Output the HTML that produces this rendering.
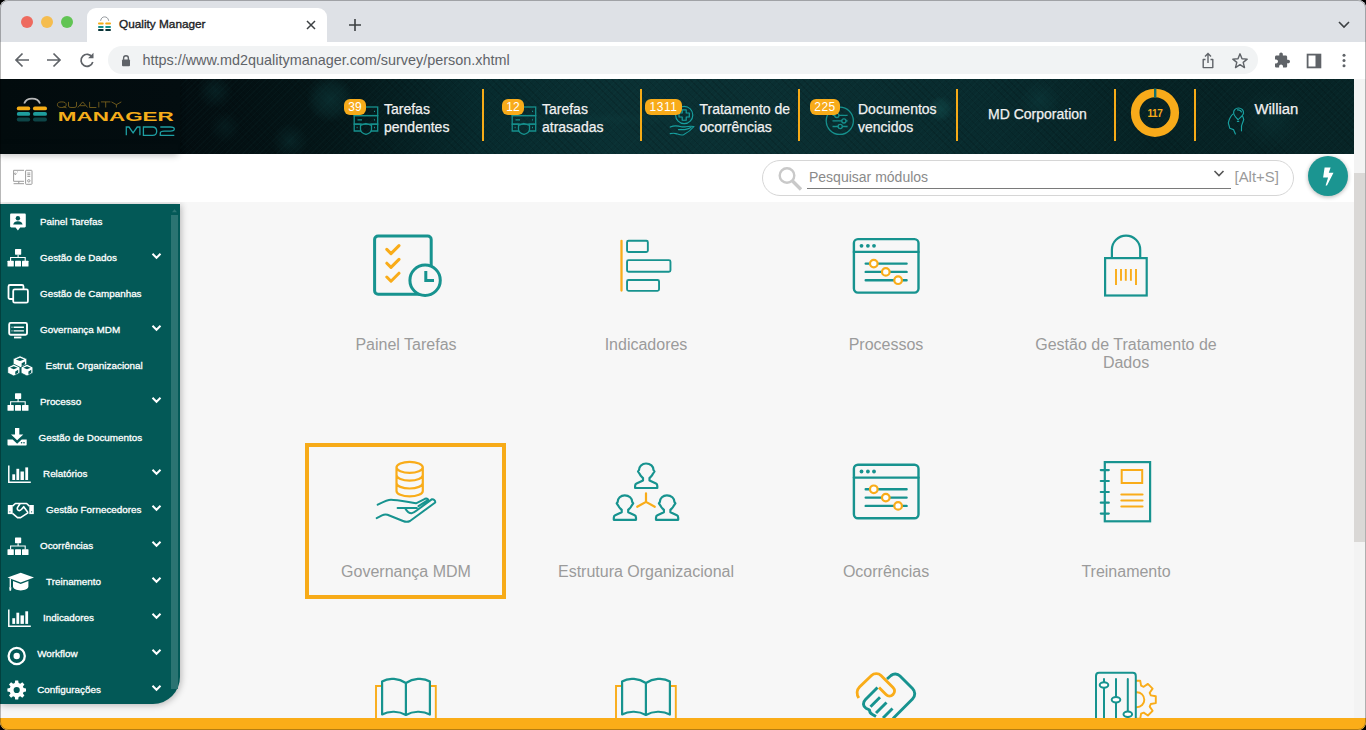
<!DOCTYPE html>
<html><head><meta charset="utf-8">
<style>
*{box-sizing:border-box;margin:0;padding:0}
html,body{width:1366px;height:730px;overflow:hidden;background:#000;font-family:"Liberation Sans",sans-serif}
.abs{position:absolute}
#win{position:absolute;left:0;top:0;width:1366px;height:730px;border-radius:8px;overflow:hidden;background:#dee1e6}
#frame{position:absolute;left:0;top:0;width:1366px;height:730px;border-radius:8px;border:1px solid rgba(0,0,0,.28);pointer-events:none}
#tabs{position:absolute;left:0;top:0;width:1366px;height:42px;background:#dee1e6}
.dot{position:absolute;width:12px;height:12px;border-radius:50%;top:16px}
#tab{position:absolute;left:87px;top:8px;width:240px;height:35px;background:#fff;border-radius:9px 9px 0 0}
#toolbar{position:absolute;left:0;top:42px;width:1366px;height:37px;background:#fff}
#omni{position:absolute;left:108px;top:4px;width:1150px;height:28px;border-radius:14px;background:#f1f3f4}
#header{position:absolute;left:0;top:79px;width:1354px;height:75px;overflow:hidden;
 background:
  radial-gradient(circle at 330px 20px, rgba(16,70,72,.45) 0, rgba(16,70,72,.25) 14px, rgba(16,70,72,0) 24px),
  radial-gradient(circle at 215px 12px, rgba(16,70,72,.3) 0, rgba(16,70,72,0) 18px),
  radial-gradient(circle at 290px 62px, rgba(16,70,72,.3) 0, rgba(16,70,72,0) 18px),
  radial-gradient(circle at 225px 48px, rgba(16,70,72,.2) 0, rgba(16,70,72,0) 16px),
  radial-gradient(circle at 940px 30px, rgba(18,80,80,.55) 0, rgba(18,80,80,.3) 8px, rgba(18,80,80,0) 13px),
  radial-gradient(circle at 1040px 22px, rgba(16,70,72,.35) 0, rgba(16,70,72,0) 20px),
  radial-gradient(circle at 1270px 40px, rgba(16,70,72,.25) 0, rgba(16,70,72,0) 30px),
  radial-gradient(ellipse at 600px 40px, rgba(14,60,62,.35) 0, rgba(14,60,62,0) 120px),
  repeating-linear-gradient(135deg,rgba(40,110,110,.05) 0 1px,rgba(0,0,0,0) 1px 4px),
  repeating-linear-gradient(45deg,rgba(0,0,0,.12) 0 1px,rgba(0,0,0,0) 1px 5px),
  linear-gradient(90deg,#020b0d 0,#030d10 180px,#041618 330px,#072a2d 480px,#0a3033 620px,#0a2e31 820px,#082a2d 1000px,#062224 1150px,#072426 1354px)}
#logoblk{position:absolute;left:0;top:0;width:180px;height:75px;background:linear-gradient(90deg,#020b0d,#030d10);box-shadow:0 2px 5px rgba(0,0,0,.35)}
.sep{position:absolute;top:10px;width:2px;height:52px;background:#f7ab17}
.htxt{position:absolute;color:#f1f1f1;font-size:14px;line-height:18px;white-space:nowrap;-webkit-text-stroke:.25px #f1f1f1}
.badge{position:absolute;top:20px;height:16px;border-radius:6px;background:#f8ab1a;color:#fff;font-size:12px;line-height:16px;text-align:center}
#wbar{position:absolute;left:0;top:154px;width:1354px;height:48px;background:#fff}
#content{position:absolute;left:0;top:202px;width:1354px;height:516px;background:#f7f7f7;overflow:hidden}
#scroll{position:absolute;left:1354px;top:79px;width:12px;height:639px;background:#f3f3f3}
#thumb{position:absolute;left:0;top:94px;width:11px;height:369px;background:#dad8d6}
#ybar{position:absolute;left:0;top:718px;width:1366px;height:12px;background:#fbad18}
#side{position:absolute;left:0;top:2px;width:180px;height:500px;background:#035957;border-radius:0 0 27px 0;box-shadow:1px 1px 7px rgba(0,0,0,.28)}
.si{position:absolute;left:0;width:180px;height:36px;color:#fff;font-weight:bold;font-size:9.4px}
.si .t{position:absolute;top:12px;white-space:nowrap}
.lbl{position:absolute;width:220px;text-align:center;color:#9b9b9b;font-size:16px;line-height:18px}
.st{position:absolute;color:#fff;font-size:9.9px;line-height:12px;white-space:nowrap;-webkit-text-stroke:.3px #fff}
</style></head><body>
<div id="win">
 <div id="tabs">
  <div class="dot" style="left:21px;background:#ee6a5f"></div>
  <div class="dot" style="left:41px;background:#f5bd4f"></div>
  <div class="dot" style="left:61px;background:#61c454"></div>
  <div id="tab"></div>
  <svg class="abs" style="left:97px;top:16px" width="16" height="16" viewBox="0 0 16 16">
   <path d="M3.6 4.8C4 1.9 5.8 0.9 7.6 0.9C9.4 0.9 11.2 1.9 11.7 4.8" fill="none" stroke="#8a8f94" stroke-width=".9"/>
   <rect x="1" y="6.6" width="5.7" height="1.9" rx=".9" fill="#f6ab17"/><rect x="8.2" y="6.6" width="5.8" height="1.9" rx=".9" fill="#f6ab17"/>
   <rect x="1" y="10" width="5.7" height="1.9" rx=".9" fill="#16908d"/><rect x="8.2" y="10" width="5.8" height="1.9" rx=".9" fill="#16908d"/>
   <rect x="1" y="13" width="5.7" height="1.9" rx=".9" fill="#0b3538"/><rect x="8.2" y="13" width="5.8" height="1.9" rx=".9" fill="#0b3538"/>
  </svg>
  <div class="abs" style="left:119px;top:17px;font-size:11.8px;line-height:14px;color:#202124;-webkit-text-stroke:.35px #202124">Quality Manager</div>
  <svg class="abs" style="left:305px;top:19px" width="12" height="12" viewBox="0 0 12 12"><path d="M2 2L10 10M10 2L2 10" stroke="#3c4043" stroke-width="1.5"/></svg>
  <svg class="abs" style="left:348px;top:18px" width="14" height="14" viewBox="0 0 14 14"><path d="M7 1V13M1 7H13" stroke="#3c4043" stroke-width="1.6"/></svg>
  <svg class="abs" style="left:1337px;top:18px" width="14" height="12" viewBox="0 0 14 12"><path d="M2 4L7 9L12 4" fill="none" stroke="#3c4043" stroke-width="1.6"/></svg>
 </div>
 <div id="toolbar">
  <div id="omni"></div>
  <svg class="abs" style="left:13px;top:9px" width="18" height="18" viewBox="0 0 18 18"><path d="M16 9H3M9.5 2.5L3 9L9.5 15.5" fill="none" stroke="#5f6368" stroke-width="1.7"/></svg>
  <svg class="abs" style="left:45px;top:9px" width="18" height="18" viewBox="0 0 18 18"><path d="M2 9H15M8.5 2.5L15 9L8.5 15.5" fill="none" stroke="#5f6368" stroke-width="1.7"/></svg>
  <svg class="abs" style="left:78px;top:9px" width="18" height="18" viewBox="0 0 18 18"><path d="M14.2 6.2A6 6 0 1 0 14.8 11" fill="none" stroke="#5f6368" stroke-width="1.7"/><path d="M15.5 1.8V7.2H10.1Z" fill="#5f6368"/></svg>
  <svg class="abs" style="left:121px;top:12px" width="10" height="13" viewBox="0 0 10 13"><path d="M2.6 6V4.2A2.4 2.4 0 0 1 7.4 4.2V6" fill="none" stroke="#5f6368" stroke-width="1.4"/><rect x="1" y="5.6" width="8" height="6.6" rx="1" fill="#5f6368"/></svg>
  <div class="abs" style="left:142.5px;top:9px;font-size:14.4px;line-height:18px;color:#5f6368;white-space:nowrap">https://www.md2qualitymanager.com/survey/person.xhtml</div>
  <svg class="abs" style="left:1199px;top:10px" width="18" height="18" viewBox="0 0 18 18"><path d="M6.5 7.5H4.2V15.6H13.8V7.5H11.5" fill="none" stroke="#5f6368" stroke-width="1.4" stroke-linejoin="round"/><path d="M9 11V1.8M6 4.6L9 1.6L12 4.6" fill="none" stroke="#5f6368" stroke-width="1.4"/></svg>
  <svg class="abs" style="left:1231px;top:10px" width="18" height="18" viewBox="0 0 18 18"><path d="M9 1.8L11 6.8L16.2 7.1L12.2 10.4L13.5 15.6L9 12.7L4.5 15.6L5.8 10.4L1.8 7.1L7 6.8Z" fill="none" stroke="#5f6368" stroke-width="1.4" stroke-linejoin="round"/></svg>
  <svg class="abs" style="left:1273px;top:10px" width="18" height="18" viewBox="0 0 18 18"><path transform="translate(0.57 -0.11) scale(0.714)" d="M20.5 11H19V7c0-1.1-.9-2-2-2h-4V3.5C13 2.12 11.88 1 10.5 1S8 2.12 8 3.5V5H4c-1.1 0-1.99.9-1.99 2v3.8H3.5c1.490 0 2.7 1.21 2.7 2.7s-1.21 2.7-2.7 2.7H2V20c0 1.1.9 2 2 2h3.8v-1.5c0-1.49 1.21-2.7 2.7-2.7 1.49 0 2.7 1.21 2.7 2.7V22H17c1.1 0 2-.9 2-2v-4h1.5c1.38 0 2.5-1.12 2.5-2.5S21.88 11 20.5 11z" fill="#5f6368"/></svg>
  <svg class="abs" style="left:1305px;top:10px" width="18" height="18" viewBox="0 0 18 18"><rect x="2.6" y="2.6" width="12.8" height="12.8" fill="none" stroke="#5f6368" stroke-width="1.8"/><rect x="10.5" y="2.6" width="4.9" height="12.8" fill="#5f6368"/></svg>
  <svg class="abs" style="left:1336px;top:10px" width="16" height="18" viewBox="0 0 16 18"><circle cx="8" cy="3.2" r="1.5" fill="#5f6368"/><circle cx="8" cy="8.5" r="1.5" fill="#5f6368"/><circle cx="8" cy="13.8" r="1.5" fill="#5f6368"/></svg>
 </div>
 <div id="header">
  <div id="logoblk">
   <svg class="abs" style="left:0;top:0" width="180" height="75" viewBox="0 0 180 75">
    <path d="M24.2 24.5 A8.3 7 0 0 1 40 24.5" fill="none" stroke="#b8b8b8" stroke-width="1.8"/>
    <rect x="16.8" y="27.6" width="13.4" height="3.7" rx="1.85" fill="#f5ad17"/><rect x="33" y="27.6" width="14" height="3.7" rx="1.85" fill="#f5ad17"/>
    <rect x="16.8" y="33.1" width="13.4" height="3.7" rx="1.85" fill="#1e9d9d"/><rect x="33" y="33.1" width="14" height="3.7" rx="1.85" fill="#1e9d9d"/>
    <rect x="16.8" y="38.6" width="13.4" height="3.8" rx="1.9" fill="#0d4547"/><rect x="33" y="38.6" width="14" height="3.8" rx="1.9" fill="#0d4547"/>
    <g fill="none" stroke="#8c6f20" stroke-width=".75"><ellipse cx="61.8" cy="25.7" rx="4.4" ry="2.8"/><path d="M63.5 27.5L66.5 28.8"/><path d="M68.5 22.9V27.0Q68.5 28.5 71 28.5H74Q76.5 28.5 76.5 27.0V22.9"/><path d="M77.8 28.5L82.7 22.9L87.6 28.5M80 26.7H85.3"/><path d="M89.6 22.9V28.5H96.4"/><path d="M98.8 22.9V28.5"/><path d="M101 22.9H110.4M105.7 22.9V28.5"/><path d="M111.5 22.9L116.4 25.7L121.3 22.9M116.4 25.7V28.5"/></g>
    <text x="57.8" y="42.2" textLength="116" lengthAdjust="spacingAndGlyphs" font-family="Liberation Sans" font-weight="bold" font-size="12.6" fill="#f6ae1b">MANAGER</text>
    <g fill="none" stroke="#1e9fa3" stroke-width="1.3"><path d="M126.3 56.3V48H129L133.1 53.8L137.2 48H139.9V56.3"/><path d="M143.4 56.3V48H152.5Q156.7 48 156.7 52.15Q156.7 56.3 152.5 56.3Z"/><path d="M160.3 48H170.3Q174.3 48 174.3 50.1Q174.3 52.2 170.3 52.2H164.3Q160.3 52.2 160.3 54.3V56.3H174.3"/></g>
   </svg>
  </div>
  <!-- item 1 -->
  <svg class="abs" style="left:353px;top:27px" width="26" height="29" viewBox="0 0 26 29" fill="none" stroke="#16908d" stroke-width="1.3">
   <rect x="1.2" y="1" width="23.5" height="8.6"/><rect x="1.2" y="9.6" width="23.5" height="8.6"/>
   <path d="M8.5 18.2H1.2V25H8.2M17.5 18.2H24.7V25H17.7"/>
   <path d="M13 17.5L18.5 19.5V23.5C18.5 26 15.8 27.6 13 28.4C10.2 27.6 7.5 26 7.5 23.5V19.5Z"/>
   <path d="M4.5 13.9H9M21 5.3H22M21 13.9H22M21 21.5H22M3.6 21.5H4.6"/>
  </svg>
  <div class="badge" style="left:344px;width:22px">39</div>
  <div class="htxt" style="left:384px;top:21px">Tarefas<br>pendentes</div>
  <!-- item 2 -->
  <svg class="abs" style="left:511px;top:27px" width="26" height="29" viewBox="0 0 26 29" fill="none" stroke="#16908d" stroke-width="1.3">
   <rect x="1.2" y="1" width="23.5" height="8.6"/><rect x="1.2" y="9.6" width="23.5" height="8.6"/>
   <path d="M8.5 18.2H1.2V25H8.2M17.5 18.2H24.7V25H17.7"/>
   <path d="M13 17.5L18.5 19.5V23.5C18.5 26 15.8 27.6 13 28.4C10.2 27.6 7.5 26 7.5 23.5V19.5Z"/>
   <path d="M4.5 13.9H9M21 5.3H22M21 13.9H22M21 21.5H22M3.6 21.5H4.6"/>
  </svg>
  <div class="badge" style="left:502px;width:22px">12</div>
  <div class="htxt" style="left:542px;top:21px">Tarefas<br>atrasadas</div>
  <!-- item 3 -->
  <svg class="abs" style="left:669px;top:26px" width="26" height="31" viewBox="0 0 26 31" fill="none" stroke="#17a0a0" stroke-width="1.15" stroke-linejoin="round" stroke-linecap="round">
   <circle cx="15.2" cy="10" r="8.6"/>
   <path d="M13.2 4.8H17.2V8H20.3V12H17.2V15.2H13.2V12H10V8H13.2Z"/>
   <path d="M1.2 22.1C4 20.8 8 20.5 12.5 21.8L16.5 21.8C19 21.3 21.5 20.8 25 21.5C22.5 24.5 19 27.5 14.5 29.8C12.5 30.6 10 29.5 7 28.6C5 28.1 3 28.2 1.2 28.6M9.5 24.6H15.8C18 24.3 20 23.5 22 22.5"/>
  </svg>
  <div class="badge" style="left:645px;width:37px;letter-spacing:.6px">1311</div>
  <div class="htxt" style="left:699.5px;top:21px">Tratamento de<br>ocorrências</div>
  <!-- item 4 -->
  <svg class="abs" style="left:825px;top:27px" width="30" height="30" viewBox="0 0 30 30" fill="none" stroke="#16908d" stroke-width="1.3">
   <circle cx="14.8" cy="14.8" r="13.6"/>
   <path d="M7.5 9.4H22.6M7.5 14.9H22.6M7.5 20.5H22.6"/>
   <circle cx="11.8" cy="9.4" r="2.1" fill="#0a2a2c"/><circle cx="18.9" cy="14.9" r="2.1" fill="#0a2a2c"/><circle cx="15.2" cy="20.5" r="2.1" fill="#0a2a2c"/>
  </svg>
  <div class="badge" style="left:810px;width:30px;letter-spacing:.5px">225</div>
  <div class="htxt" style="left:858px;top:21px">Documentos<br>vencidos</div>
  <!-- corp -->
  <div class="htxt" style="left:988px;top:26px">MD Corporation</div>
  <!-- donut -->
  <svg class="abs" style="left:1130px;top:9px" width="50" height="50" viewBox="0 0 50 50">
   <circle cx="25" cy="24.8" r="19.8" fill="none" stroke="#f8ab1a" stroke-width="8.6"/>
   <path d="M25.2 0.6V9.6" stroke="#11706f" stroke-width="2.4"/>
   <text x="25" y="28.5" text-anchor="middle" font-family="Liberation Sans" font-weight="bold" font-size="10" fill="#f8ab1a" letter-spacing="-.3">117</text>
  </svg>
  <!-- person -->
  <svg class="abs" style="left:1226px;top:27px" width="22" height="30" viewBox="0 0 22 30" fill="none" stroke="#19a3a3" stroke-width="1.15" stroke-linejoin="round" stroke-linecap="round">
   <path d="M12.1 13.7C10 11.5 7.8 9.5 7.6 7C7.4 4 9.8 2 12.5 2C15.5 2 17.7 4.2 17.5 7C17.3 9.5 14.3 11.5 12.1 13.7Z"/>
   <path d="M11.5 3.9C13.5 3.7 15 4.5 15.5 6M11.4 15.3H12.8"/>
   <path d="M6.9 8.1C5 9.5 3.5 12 2.3 16.8L3.8 22.3L7.5 23.6L9.4 27.9M16.5 10C17 11 17.7 12.5 17.7 13.7L15.5 19.9V24.8"/>
  </svg>
  <div class="htxt" style="left:1254.5px;top:21.3px;font-size:14.9px">Willian</div>
  <div class="sep" style="left:482px"></div>
  <div class="sep" style="left:640px"></div>
  <div class="sep" style="left:798px"></div>
  <div class="sep" style="left:956px"></div>
  <div class="sep" style="left:1114px"></div>
  <div class="sep" style="left:1194px"></div>
 </div>
 <div id="wbar">
  <div class="abs" style="left:0;top:-10px;width:178px;height:10px;box-shadow:0 2px 6px rgba(0,0,0,.22)"></div>
  <svg class="abs" style="left:12px;top:15px" width="22" height="17" viewBox="0 0 22 17" fill="none" stroke="#9b9b9b" stroke-width="1">
   <path d="M12 1.3H1.6V12.3H12M1.6 14.7H12M6.8 12.3V14.7"/>
   <rect x="13.6" y="1.3" width="6.4" height="14" rx=".6"/>
   <path d="M15.3 4H18.3M15.3 5.7H18.3M15.3 7.4H18.3"/><circle cx="16.8" cy="11.8" r="1.2"/>
   <path d="M3.3 3.8L4.3 4.8L3.3 5.8L2.3 4.8ZM5.2 3.2L5.8 2.6"/>
  </svg>
  <div class="abs" style="left:762px;top:6px;width:532px;height:36px;border:1px solid #d6d6d6;border-radius:18px"></div>
  <svg class="abs" style="left:777px;top:12px" width="27" height="26" viewBox="0 0 27 26">
   <circle cx="10" cy="9.5" r="7.3" fill="none" stroke="#c9c9c9" stroke-width="2.4"/>
   <path d="M15.5 15L24 23.5" stroke="#c9c9c9" stroke-width="3.4"/>
  </svg>
  <div class="abs" style="left:809px;top:15px;font-size:14px;line-height:16px;color:#8a8a8a;white-space:nowrap">Pesquisar módulos</div>
  <div class="abs" style="left:807px;top:33.8px;width:424px;height:1.3px;background:#7a7a7a"></div>
  <svg class="abs" style="left:1212px;top:14px" width="14" height="10" viewBox="0 0 14 10"><path d="M2.5 3L7 7.5L11.5 3" fill="none" stroke="#555" stroke-width="1.6"/></svg>
  <div class="abs" style="left:1234.5px;top:14.5px;font-size:14.9px;line-height:16px;color:#9a9a9a;white-space:nowrap">[Alt+S]</div>
  <div class="abs" style="left:1308px;top:2px;width:40px;height:40px;border-radius:50%;background:#1b9591;box-shadow:0 1px 4px rgba(0,0,0,.3)"></div>
  <svg class="abs" style="left:1318px;top:10px" width="20" height="24" viewBox="0 0 20 24"><path d="M6.6 3.5H12.6L10.8 8.8H15.5L9 21.6H7.6L10.1 13.4H5.1Z" fill="#fff"/></svg>
 </div>
 <div id="content">
<div id="side">
<div class="st" style="left:40px;top:11.75px">Painel Tarefas</div>
<div class="st" style="left:40px;top:47.75px">Gestão de Dados</div>
<svg class="abs" style="left:150px;top:46.5px" width="13" height="10" viewBox="0 0 13 10"><path d="M2.5 2.8L6.5 6.8L10.5 2.8" fill="none" stroke="#fff" stroke-width="2"/></svg>
<div class="st" style="left:40px;top:83.75px">Gestão de Campanhas</div>
<div class="st" style="left:40px;top:119.75px">Governança MDM</div>
<svg class="abs" style="left:150px;top:118.5px" width="13" height="10" viewBox="0 0 13 10"><path d="M2.5 2.8L6.5 6.8L10.5 2.8" fill="none" stroke="#fff" stroke-width="2"/></svg>
<div class="st" style="left:45.6px;top:155.75px">Estrut. Organizacional</div>
<div class="st" style="left:40px;top:191.75px">Processo</div>
<svg class="abs" style="left:150px;top:190.5px" width="13" height="10" viewBox="0 0 13 10"><path d="M2.5 2.8L6.5 6.8L10.5 2.8" fill="none" stroke="#fff" stroke-width="2"/></svg>
<div class="st" style="left:38.5px;top:227.75px">Gestão de Documentos</div>
<div class="st" style="left:43px;top:263.75px">Relatórios</div>
<svg class="abs" style="left:150px;top:262.5px" width="13" height="10" viewBox="0 0 13 10"><path d="M2.5 2.8L6.5 6.8L10.5 2.8" fill="none" stroke="#fff" stroke-width="2"/></svg>
<div class="st" style="left:46px;top:299.75px">Gestão Fornecedores</div>
<svg class="abs" style="left:150px;top:298.5px" width="13" height="10" viewBox="0 0 13 10"><path d="M2.5 2.8L6.5 6.8L10.5 2.8" fill="none" stroke="#fff" stroke-width="2"/></svg>
<div class="st" style="left:40px;top:335.75px">Ocorrências</div>
<svg class="abs" style="left:150px;top:334.5px" width="13" height="10" viewBox="0 0 13 10"><path d="M2.5 2.8L6.5 6.8L10.5 2.8" fill="none" stroke="#fff" stroke-width="2"/></svg>
<div class="st" style="left:46px;top:371.75px">Treinamento</div>
<svg class="abs" style="left:150px;top:370.5px" width="13" height="10" viewBox="0 0 13 10"><path d="M2.5 2.8L6.5 6.8L10.5 2.8" fill="none" stroke="#fff" stroke-width="2"/></svg>
<div class="st" style="left:43px;top:407.75px">Indicadores</div>
<svg class="abs" style="left:150px;top:406.5px" width="13" height="10" viewBox="0 0 13 10"><path d="M2.5 2.8L6.5 6.8L10.5 2.8" fill="none" stroke="#fff" stroke-width="2"/></svg>
<div class="st" style="left:37.2px;top:443.75px">Workflow</div>
<svg class="abs" style="left:150px;top:442.5px" width="13" height="10" viewBox="0 0 13 10"><path d="M2.5 2.8L6.5 6.8L10.5 2.8" fill="none" stroke="#fff" stroke-width="2"/></svg>
<div class="st" style="left:37.2px;top:479.75px">Configurações</div>
<svg class="abs" style="left:150px;top:478.5px" width="13" height="10" viewBox="0 0 13 10"><path d="M2.5 2.8L6.5 6.8L10.5 2.8" fill="none" stroke="#fff" stroke-width="2"/></svg>
<svg class="abs" style="left:0;top:0" width="40" height="500" viewBox="0 0 40 500">
<path d="M11.3 9.6H24.6C25.3 9.6 25.8 10.1 25.8 10.8V22.3C25.8 23 25.3 23.5 24.6 23.5H20.2L17.9 26.4L15.6 23.5H11.3C10.6 23.5 10.1 23 10.1 22.3V10.8C10.1 10.1 10.6 9.6 11.3 9.6Z" fill="#fff"/>
<circle cx="17.9" cy="14.2" r="2.2" fill="#035957"/><path d="M13.2 20.6C13.5 18.3 15.5 17.2 17.9 17.2C20.3 17.2 22.3 18.3 22.6 20.6Z" fill="#035957"/>
<rect x="15" y="45" width="6.2" height="5.7" rx=".6" fill="#fff"/><path d="M18.1 50.7V53.5M10.6 56.9V53.5H25.2V56.9" fill="none" stroke="#fff" stroke-width="1.1"/><rect x="7.5" y="56.7" width="6.3" height="5.9" rx=".6" fill="#fff"/><rect x="15" y="56.7" width="6" height="5.9" rx=".6" fill="#fff"/><rect x="22" y="56.7" width="6.5" height="5.9" rx=".6" fill="#fff"/>
<rect x="8.5" y="81" width="15" height="14" rx="1.5" fill="none" stroke="#fff" stroke-width="1.8"/>
<rect x="13.2" y="85.4" width="14.7" height="13.3" rx="1.5" fill="#035957" stroke="#fff" stroke-width="1.8"/>
<rect x="9.2" y="118.9" width="17.8" height="11.8" rx="1.5" fill="none" stroke="#fff" stroke-width="1.9"/>
<path d="M14 132.6H21.4V134.4H14Z" fill="#fff"/><path d="M13.6 123.3H23.9M13.6 126.9H23.9" stroke="#fff" stroke-width="1.4"/><path d="M11.6 123.3H12.4M11.6 126.9H12.4" stroke="#fff" stroke-width="1.4"/>
<path d="M20 151.8L26.8 154.8V160.8L20 163.8L13.2 160.8V154.8Z" fill="#fff" stroke="#035957" stroke-width=".8"/><path d="M20 153.84L24.216 155.4L20 156.96L15.783999999999999 155.4Z M21.632 159.24L24.896 157.44V160.44L21.632 162.24Z" fill="#035957"/><path d="M13.8 160.2L19.9 163.14999999999998V169.04999999999998L13.8 172.0L7.700000000000001 169.04999999999998V163.14999999999998Z" fill="#fff" stroke="#035957" stroke-width=".8"/><path d="M13.8 162.206L17.582 163.73999999999998L13.8 165.274L10.018 163.73999999999998Z M15.264000000000001 167.516L18.192 165.74599999999998V168.696L15.264000000000001 170.46599999999998Z" fill="#035957"/><path d="M27 160.2L32.9 163.14999999999998V169.04999999999998L27 172.0L21.1 169.04999999999998V163.14999999999998Z" fill="#fff" stroke="#035957" stroke-width=".8"/><path d="M27 162.206L30.658 163.73999999999998L27 165.274L23.342 163.73999999999998Z M28.416 167.516L31.248 165.74599999999998V168.696L28.416 170.46599999999998Z" fill="#035957"/>
<rect x="15" y="189.2" width="6.2" height="5.7" rx=".6" fill="#fff"/><path d="M18.1 194.89999999999998V197.7M10.6 201.1V197.7H25.2V201.1" fill="none" stroke="#fff" stroke-width="1.1"/><rect x="7.5" y="200.89999999999998" width="6.3" height="5.9" rx=".6" fill="#fff"/><rect x="15" y="200.89999999999998" width="6" height="5.9" rx=".6" fill="#fff"/><rect x="22" y="200.89999999999998" width="6.5" height="5.9" rx=".6" fill="#fff"/>
<path d="M15 224H19.3V230.5H23.3L17.15 236.2L11 230.5H15Z" fill="#fff"/>
<path d="M7.5 235.5H12.6L17.15 239.8L21.7 235.5H26.7V240.6C26.7 241.2 26.3 241.6 25.7 241.6H8.5C7.9 241.6 7.5 241.2 7.5 240.6Z" fill="#fff"/>
<circle cx="21.6" cy="238.8" r=".8" fill="#035957"/><circle cx="24" cy="238.8" r=".8" fill="#035957"/>
<path d="M8.8 261.5V278.3H30.8" fill="none" stroke="#fff" stroke-width="1.5"/><rect x="12.3" y="270.3" width="2.8" height="5.7" fill="#fff"/><rect x="16.4" y="264.8" width="2.8" height="11.2" fill="#fff"/><rect x="20.5" y="267.5" width="3.4" height="8.5" fill="#fff"/><rect x="25.3" y="263.4" width="2.8" height="12.6" fill="#fff"/>
<rect x="7.8" y="301" width="4.9" height="9.1" fill="#fff"/><rect x="29.3" y="301" width="4.5" height="9.1" fill="#fff"/>
<circle cx="9.9" cy="307.8" r=".6" fill="#035957"/><circle cx="31.6" cy="307.8" r=".6" fill="#035957"/>
<path d="M12.5 302.2L15.4 299.5H26.6L29.4 302.2M12.5 309.3L17.5 313.6H20.6L28.3 308.6M20 299.8L17.6 303.4C16.8 304.9 17.8 306.6 19.4 306.6C20.4 306.6 21.1 306 21.6 305.2L23.7 302.7L28.1 308.7" fill="none" stroke="#fff" stroke-width="1.6" stroke-linejoin="round"/>
<rect x="15" y="333.5" width="6.2" height="5.7" rx=".6" fill="#fff"/><path d="M18.1 339.2V342.0M10.6 345.4V342.0H25.2V345.4" fill="none" stroke="#fff" stroke-width="1.1"/><rect x="7.5" y="345.2" width="6.3" height="5.9" rx=".6" fill="#fff"/><rect x="15" y="345.2" width="6" height="5.9" rx=".6" fill="#fff"/><rect x="22" y="345.2" width="6.5" height="5.9" rx=".6" fill="#fff"/>
<path d="M20.7 368.7L34 373.5L20.7 378.6L7.5 373.5Z" fill="#fff"/>
<path d="M13 377V382.6C13 384.8 16.6 386.4 20.7 386.4C24.8 386.4 28.4 384.8 28.4 382.6V377L20.7 379.9Z" fill="#fff"/>
<path d="M10.3 374.6V383.6" stroke="#fff" stroke-width="1.3"/><path d="M9.2 383.2H11.4L11.1 386.8H9.5Z" fill="#fff"/>
<path d="M8.8 405.4V422.2H30.8" fill="none" stroke="#fff" stroke-width="1.5"/><rect x="12.3" y="414.2" width="2.8" height="5.7" fill="#fff"/><rect x="16.4" y="408.7" width="2.8" height="11.2" fill="#fff"/><rect x="20.5" y="411.4" width="3.4" height="8.5" fill="#fff"/><rect x="25.3" y="407.29999999999995" width="2.8" height="12.6" fill="#fff"/>
<circle cx="16.7" cy="452" r="8.1" fill="none" stroke="#fff" stroke-width="2.3"/><circle cx="16.7" cy="452" r="3.2" fill="#fff"/>
<path d="M15.2 476.6H18.2L18.6 479.1L20.3 479.8L22.3 478.3L24.4 480.4L22.9 482.4L23.6 484.1L26 484.5V487.5L23.6 487.9L22.9 489.6L24.4 491.6L22.3 493.7L20.3 492.2L18.6 492.9L18.2 495.4H15.2L14.8 492.9L13.1 492.2L11.1 493.7L9 491.6L10.5 489.6L9.8 487.9L7.4 487.5V484.5L9.8 484.1L10.5 482.4L9 480.4L11.1 478.3L13.1 479.8L14.8 479.1Z" fill="#fff"/>
<circle cx="16.7" cy="486" r="3.1" fill="#035957"/>
</svg>
<div style="position:absolute;left:171px;top:11px;width:7px;height:474px;background:#2b7472"></div>
<svg class="abs" style="left:170px;top:3px" width="9" height="7" viewBox="0 0 9 7"><path d="M2 5.2L4.5 2.2L7 5.2Z" fill="#2b7472"/></svg>
</div><div class="lbl" style="left:296px;top:134.2px">Painel Tarefas</div>
<div class="lbl" style="left:536px;top:134.2px">Indicadores</div>
<div class="lbl" style="left:776px;top:134.2px">Processos</div>
<div class="lbl" style="left:1016px;top:134.2px">Gestão de Tratamento de<br>Dados</div>
<div class="lbl" style="left:296px;top:361.1px">Governança MDM</div>
<div class="lbl" style="left:536px;top:361.1px">Estrutura Organizacional</div>
<div class="lbl" style="left:776px;top:361.1px">Ocorrências</div>
<div class="lbl" style="left:1016px;top:361.1px">Treinamento</div>
<div class="abs" style="left:305px;top:241px;width:201px;height:156px;border:4px solid #f7ab18"></div>
<svg class="abs" style="left:366px;top:26px" width="80" height="80" viewBox="366 228 80 80"><rect x="374.6" y="236.1" width="56.6" height="58.1" rx="3.5" fill="none" stroke="#17938f" stroke-width="3"/>
<circle cx="425.1" cy="280.2" r="15.2" fill="#f7f7f7" stroke="#17938f" stroke-width="3"/>
<path d="M425.8 271V280.6H434" fill="none" stroke="#17938f" stroke-width="3"/>
<path d="M386.8 249.4L391 253.6L399 245.6M386.8 263.2L391 267.4L399 259.4M386.8 277L391 281.2L399 273.2" fill="none" stroke="#f9ac19" stroke-width="3" stroke-linecap="round" stroke-linejoin="round"/></svg>
<svg class="abs" style="left:610px;top:28px" width="70" height="70" viewBox="610 230 70 70"><path d="M621.5 240.8V290.6" stroke="#f9ac19" stroke-width="2.3" stroke-linecap="round"/>
<rect x="627.05" y="240.75" width="20.8" height="11.3" rx="1.5" fill="none" stroke="#17938f" stroke-width="1.9"/>
<rect x="627.05" y="260.15" width="43.4" height="11.6" rx="1.5" fill="none" stroke="#17938f" stroke-width="1.9"/>
<rect x="627.05" y="280.05" width="32" height="10.8" rx="1.5" fill="none" stroke="#17938f" stroke-width="1.9"/></svg>
<svg class="abs" style="left:846px;top:28px" width="80" height="70" viewBox="846 230 80 70"><rect x="853.9" y="239.1" width="64.6" height="53.5" rx="4" fill="none" stroke="#17938f" stroke-width="2.4"/>
<path d="M853.9 251.9H918.5M865.7 263.6H906.6M865.7 271.9H906.6M865.7 280.2H906.6" stroke="#17938f" stroke-width="2.4" stroke-linecap="round"/>
<circle cx="861.5" cy="245.8" r="1.9" fill="#17938f"/><circle cx="867.9" cy="245.8" r="1.9" fill="#17938f"/><circle cx="874" cy="245.8" r="1.9" fill="#17938f"/>
<circle cx="873.8" cy="263.6" r="3.8" fill="#fff" stroke="#f9ac19" stroke-width="2.2"/><circle cx="885.8" cy="271.9" r="3.8" fill="#fff" stroke="#f9ac19" stroke-width="2.2"/><circle cx="898.1" cy="280.2" r="3.8" fill="#fff" stroke="#f9ac19" stroke-width="2.2"/></svg>
<svg class="abs" style="left:1090px;top:24px" width="70" height="80" viewBox="1090 226 70 80"><path d="M1111.9 258V249.75A14.15 14.15 0 0 1 1140.2 249.75V258" fill="none" stroke="#17938f" stroke-width="2.2"/>
<rect x="1105.1" y="258.1" width="41.6" height="37.4" fill="none" stroke="#17938f" stroke-width="2.2"/>
<path d="M1116 269V284.9M1121 269V280.8M1125.8 269V280.8M1130.9 269V280.8M1136 269V284.9" stroke="#f9ac19" stroke-width="1.9"/></svg>
<svg class="abs" style="left:366px;top:250px" width="80" height="80" viewBox="366 452 80 80"><path d="M396.5 467.3V490.9A13.15 5.5 0 0 0 422.8 490.9V467.3M396.5 467.3A13.15 5.5 0 0 1 422.8 467.3A13.15 5.5 0 0 1 396.5 467.3M396.5 475.1A13.15 5.5 0 0 0 422.8 475.1M396.5 483A13.15 5.5 0 0 0 422.8 483" fill="none" stroke="#f9ac19" stroke-width="2.2"/>
<path d="M377.7 504.7C383 502 387 499.7 391 499.7C396 499.7 405 501.5 416 503.3L425 498.8C426.5 498.2 428 498.8 428.2 499.8L418.5 506.2M431.7 499.4C433.5 499 435.5 500.5 435.2 502.5L410 521C408 522 406 522.2 403 521L387.5 514.8C385.5 514.2 384 514.4 382 515.4L376.7 518.1M397.6 507.9H416.8M405.3 508.4C407 511.5 409 513.2 411.5 513.2C413.5 513.1 415 511.8 417 510.2L431.7 499.4" fill="none" stroke="#17938f" stroke-width="2" stroke-linecap="round" stroke-linejoin="round"/></svg>
<svg class="abs" style="left:606px;top:250px" width="80" height="80" viewBox="606 452 80 80"><path d="M646 463.5C650.5 463.5 653.5 466.5 653.5 470L654.5 471.5L652.8 474C652 476 650.5 477 649.5 478V480.5L656 483.5C657 484 657.3 485 657.3 486V488H635.1V486C635.1 485 635.5 484 636.5 483.5L643 480.5V478C642 477 640.5 476 639.7 474L638 471.5L639 470C639 466.5 642 463.5 646 463.5Z" fill="none" stroke="#17938f" stroke-width="2.2" stroke-linejoin="round"/>
<path d="M646 463.5C650.5 463.5 653.5 466.5 653.5 470L654.5 471.5L652.8 474C652 476 650.5 477 649.5 478V480.5L656 483.5C657 484 657.3 485 657.3 486V488H635.1V486C635.1 485 635.5 484 636.5 483.5L643 480.5V478C642 477 640.5 476 639.7 474L638 471.5L639 470C639 466.5 642 463.5 646 463.5Z" transform="translate(-21.3 31.8)" fill="none" stroke="#17938f" stroke-width="2.2" stroke-linejoin="round"/>
<path d="M646 463.5C650.5 463.5 653.5 466.5 653.5 470L654.5 471.5L652.8 474C652 476 650.5 477 649.5 478V480.5L656 483.5C657 484 657.3 485 657.3 486V488H635.1V486C635.1 485 635.5 484 636.5 483.5L643 480.5V478C642 477 640.5 476 639.7 474L638 471.5L639 470C639 466.5 642 463.5 646 463.5Z" transform="translate(20.9 31.8)" fill="none" stroke="#17938f" stroke-width="2.2" stroke-linejoin="round"/>
<path d="M646 493.3V501.9L637.2 506.8M646 501.9L654.8 506.8" fill="none" stroke="#f9ac19" stroke-width="2.2" stroke-linecap="round"/></svg>
<svg class="abs" style="left:846px;top:250px" width="80" height="80" viewBox="846 452 80 80"><rect x="853.9" y="464.79999999999995" width="64.6" height="53.5" rx="4" fill="none" stroke="#17938f" stroke-width="2.4"/>
<path d="M853.9 477.6H918.5M865.7 489.3H906.6M865.7 497.59999999999997H906.6M865.7 505.9H906.6" stroke="#17938f" stroke-width="2.4" stroke-linecap="round"/>
<circle cx="861.5" cy="471.5" r="1.9" fill="#17938f"/><circle cx="867.9" cy="471.5" r="1.9" fill="#17938f"/><circle cx="874" cy="471.5" r="1.9" fill="#17938f"/>
<circle cx="873.8" cy="489.3" r="3.8" fill="#fff" stroke="#f9ac19" stroke-width="2.2"/><circle cx="885.8" cy="497.59999999999997" r="3.8" fill="#fff" stroke="#f9ac19" stroke-width="2.2"/><circle cx="898.1" cy="505.9" r="3.8" fill="#fff" stroke="#f9ac19" stroke-width="2.2"/></svg>
<svg class="abs" style="left:1090px;top:250px" width="70" height="80" viewBox="1090 452 70 80"><rect x="1104.8" y="462.1" width="45.3" height="59.2" fill="none" stroke="#17938f" stroke-width="2.2"/>
<path d="M1100.8 470.1H1108.8M1100.8 481H1108.8M1100.8 492H1108.8M1100.8 502.7H1108.8M1100.8 513.6H1108.8" stroke="#17938f" stroke-width="2.2" stroke-linecap="round"/>
<rect x="1121.7" y="470" width="20.5" height="13" fill="none" stroke="#f9ac19" stroke-width="2"/>
<path d="M1121.4 494.5H1142.5M1121.4 500.5H1142.5M1121.4 506.5H1142.5" stroke="#f9ac19" stroke-width="2.2" stroke-linecap="round"/></svg>
<svg class="abs" style="left:366px;top:468px" width="80" height="50" viewBox="366 670 80 50"><path d="M376 720V686H382M430 686H435.8V720" fill="none" stroke="#f9ac19" stroke-width="1.9"/>
<path d="M405.9 683C399 678.5 389 677 382.1 681.5V714.5C389 710.5 399 711 405.9 715C412.8 711 422.8 710.5 429.9 714.5V681.5C422.8 677 412.8 678.5 405.9 683ZM405.9 683V715" fill="#f7f7f7" stroke="#17938f" stroke-width="2.2" stroke-linejoin="round"/></svg>
<svg class="abs" style="left:606px;top:468px" width="80" height="50" viewBox="606 670 80 50"><path d="M616 720V686H622M670 686H675.8V720" fill="none" stroke="#f9ac19" stroke-width="1.9"/>
<path d="M645.9 683C639 678.5 629 677 622.1 681.5V714.5C629 710.5 639 711 645.9 715C652.8 711 662.8 710.5 669.9 714.5V681.5C662.8 677 652.8 678.5 645.9 683ZM645.9 683V715" fill="#f7f7f7" stroke="#17938f" stroke-width="2.2" stroke-linejoin="round"/></svg>
<svg class="abs" style="left:846px;top:463px" width="80" height="55" viewBox="846 665 80 55"><path d="M887 679L891 675.5C893.5 673.5 897.5 673.5 900 676L912.5 688.5C915.5 691.5 915.5 696 912.5 699L893 718.5M877.5 687.5L865.5 699.5C862.5 702.5 863 706.5 866 708.3L869.5 710C869.5 712 870.5 713.5 872.5 714.5L876 716.5M880 697.3L870.5 706.8M886.5 702.5L876 713M892.5 708.5L883 718" fill="none" stroke="#17938f" stroke-width="2.9" stroke-linecap="butt" stroke-linejoin="round"/>
<path d="M858.8 698C856.5 694.5 856.5 690 859.5 687L871.5 675.5C874 673 878.5 673 881 675.5L893 687.5C895 689.5 895 692.5 893 694.5C891 696.5 888 696.5 886 694.5L879 687.5" fill="none" stroke="#f9ac19" stroke-width="2.9" stroke-linejoin="round"/></svg>
<svg class="abs" style="left:1086px;top:463px" width="80" height="55" viewBox="1086 665 80 55"><path d="M1150.8 695.4L1155.8 696.3L1155.8 703.1L1150.8 704.0L1149.7 706.6L1152.6 710.8L1147.9 715.5L1143.7 712.6L1141.1 713.7L1140.2 718.7L1133.4 718.7L1132.5 713.7L1129.9 712.6L1125.7 715.5L1121.0 710.8L1123.9 706.6L1122.8 704.0L1117.8 703.1L1117.8 696.3L1122.8 695.4L1123.9 692.8L1121.0 688.6L1125.7 683.9L1129.9 686.8L1132.5 685.7L1133.4 680.7L1140.2 680.7L1141.1 685.7L1143.7 686.8L1147.9 683.9L1152.6 688.6L1149.7 692.8Z" fill="none" stroke="#f9ac19" stroke-width="1.9" stroke-linejoin="round"/>
<circle cx="1136.8" cy="699.7" r="7.5" fill="none" stroke="#f9ac19" stroke-width="1.9"/>
<path d="M1096 720V676C1096 674 1097 672.8 1099 672.8H1132.8C1134.8 672.8 1135.8 674 1135.8 676V720Z" fill="#f7f7f7" stroke="#17938f" stroke-width="2"/>
<path d="M1104 679V720M1116 679V720M1127.8 679V720" stroke="#17938f" stroke-width="2" stroke-linecap="round"/>
<ellipse cx="1104" cy="685" rx="4.3" ry="2.7" fill="#fff" stroke="#17938f" stroke-width="2"/>
<ellipse cx="1116" cy="699.7" rx="4.3" ry="2.7" fill="#fff" stroke="#17938f" stroke-width="2"/>
<ellipse cx="1127.8" cy="714.3" rx="4.3" ry="2.7" fill="#fff" stroke="#17938f" stroke-width="2"/></svg>
 </div>
 <div id="scroll"><div id="thumb"></div></div>
 <div id="ybar"></div>
 <div id="frame"></div>
</div>
</body></html>
